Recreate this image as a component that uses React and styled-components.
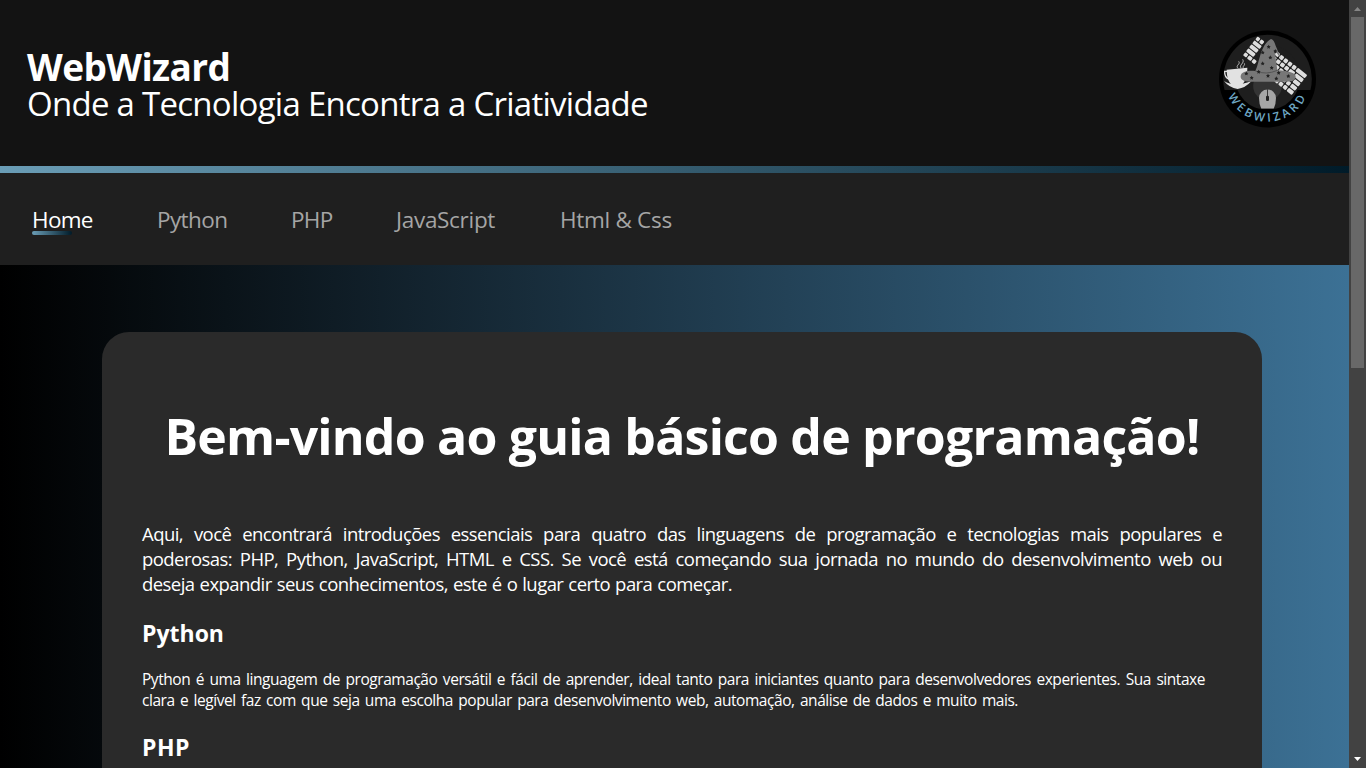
import React from "react";
import styled, { createGlobalStyle } from "styled-components";

const Global = createGlobalStyle`
  * { box-sizing: border-box; margin: 0; padding: 0; }
  body { background: #000; font-family: "Open Sans", "Noto Sans", sans-serif; color: #fff; overflow: hidden; }
`;
const Window = styled.div`
  display: flex;
  width: 1366px;
  height: 768px;
  overflow: hidden;
`;
const Page = styled.div`
  width: 1349px;
  display: flex;
  flex-direction: column;
`;
const Header = styled.header`
  flex: none;
  height: 166px;
  padding: 0 33px 0 27px;
  display: flex;
  justify-content: space-between;
  background: #131313;
`;
const Brand = styled.div`
  padding-top: 49px;
  white-space: nowrap;
`;
const BrandName = styled.h1`
  font-size: 37px;
  line-height: 36px;
  font-weight: 700;
  letter-spacing: -0.6px;
`;
const Tagline = styled.p`
  font-size: 33px;
  line-height: 37px;
  letter-spacing: -0.73px;
`;
const LogoSvg = styled.svg`
  display: block;
  width: 97px;
  height: 98px;
  margin-top: 30px;
`;
const Divider = styled.div`
  flex: none;
  height: 7px;
  background: linear-gradient(to right, #6a9db6, #001b29);
`;
const Nav = styled.nav`
  flex: none;
  height: 92px;
  padding: 31px 32px 0;
  display: flex;
  gap: 64px;
  background: #1f1f1f;
`;
const NavItem = styled.a`
  width: ${(p) => p.$w}px;
  font-size: 22.5px;
  line-height: 32px;
  letter-spacing: ${(p) => p.$ls || 0}px;
  white-space: nowrap;
  color: ${(p) => (p.$active ? "#fff" : "#a5a5a5")};
  &::after {
    content: "";
    display: ${(p) => (p.$active ? "block" : "none")};
    width: 40px;
    height: 4px;
    margin-top: -5px;
    border-radius: 2px;
    background: linear-gradient(to right, #6a9db6, #001b29);
  }
`;
const Main = styled.main`
  flex: 1;
  padding: 67px 87px 0 102px;
  background: linear-gradient(to right, #000, #3c7195);
`;
const Card = styled.section`
  height: 600px;
  padding: 71px 40px 0;
  border-radius: 27px;
  background: #2a2a2a;
`;
const Title = styled.h2`
  font-size: 50px;
  line-height: 66px;
  font-weight: 700;
  text-align: center;
  white-space: nowrap;
  letter-spacing: -0.8px;
`;
const Intro = styled.p`
  margin-top: 52px;
  font-size: 18.5px;
  line-height: 25px;
  letter-spacing: -0.55px;
`;
const Text = styled.p`
  margin-top: 20px;
  font-size: 15.5px;
  line-height: 21px;
  letter-spacing: -0.45px;
`;
const Line = styled.span`
  display: block;
  width: ${(p) => p.$w}px;
  white-space: nowrap;
  text-align: justify;
  text-align-last: justify;
`;
const Heading = styled.h3`
  margin-top: ${(p) => p.$mt}px;
  font-size: 23px;
  line-height: 32px;
  font-weight: 700;
  letter-spacing: ${(p) => p.$ls || 0}px;
`;
const Scrollbar = styled.div`
  width: 17px;
  display: flex;
  flex-direction: column;
  align-items: center;
  background: #424242;
`;
const Arrow = styled.svg`
  display: block;
  width: 17px;
  height: 17px;
`;
const Thumb = styled.div`
  width: 13px;
  height: 351px;
  margin-bottom: auto;
  background: #686868;
`;

const stars = [
  [176, 80], [158, 97], [196, 93], [181, 112], [158, 130], [185, 143],
  [146, 155], [174, 167], [206, 158], [125, 173], [109, 160], [199, 175], [235, 168],
];

// Rows of keys laid out on a keyboard tilted across the badge
const Keys = ({ x, y, angle, scale = 1, rows }) => (
  <g transform={`translate(${x} ${y}) rotate(${angle}) scale(${scale})`} fill="#dedede">
    {rows.map((row, r) =>
      row.map(([kx, w]) => <rect key={`${r}-${kx}`} x={kx} y={r * 15} width={w} height="12" rx="3" />)
    )}
  </g>
);

const Logo = () => (
  <LogoSvg viewBox="27 30 291 294" role="img" aria-label="WebWizard">
    <defs>
      <clipPath id="upper"><rect x="27" y="30" width="291" height="180" /></clipPath>
      <clipPath id="lower"><rect x="27" y="30" width="291" height="236" /></clipPath>
      <path id="arc" d="M44 157V177A128 128 0 0 0 300 177V157" />
    </defs>
    <circle cx="172.500" cy="177" r="145.500" fill="#000" />
    <circle cx="172.500" cy="177" r="133" fill="#1e1e1e" clipPath="url(#upper)" />
    <g clipPath="url(#lower)">
      <circle cx="172.500" cy="172" r="98" fill="#1e1e1e" />
      <circle cx="172.500" cy="198" r="43" fill="#343434" />
      <path d="M154 266Q147 252 147 234a25 25 0 0 1 51 0Q198 252 191 266Z" fill="#a6a6a6" />
    </g>
    <path d="M172.500 208V230" stroke="#222" strokeWidth="2.500" />
    <rect x="168" y="227" width="9" height="16" rx="4" fill="#222" />
    <Keys x={143} y={49} angle={38} rows={[[[0, 11], [14, 12]], [[0, 28]], [[0, 28]], [[0, 28]], [[0, 12], [15, 14], [32, 12]]]} />
    <Keys
      x={201}
      y={94}
      angle={38}
      scale={1.06}
      rows={[
        [[0, 12], [15, 12], [30, 12], [45, 12], [60, 12], [75, 34]],
        [[0, 12], [15, 12], [30, 12], [45, 12], [60, 18], [81, 28]],
        [[7, 12], [22, 12], [37, 12], [52, 12], [67, 18], [88, 21]],
        [[15, 12], [30, 12], [45, 12], [60, 12], [75, 12], [90, 19]],
        [[45, 12], [60, 12], [75, 12], [90, 19]],
      ]}
    />
    <path d="M50 149L112 143C112 170 105 187 92 198H70C57 190 50 174 50 149Z" fill="#e2e2e2" />
    <path d="M52 154H44Q43 173 58 178" stroke="#e2e2e2" strokeWidth="4" fill="none" />
    <path d="M42 183Q73 203 124 184Q106 204 83 207Q57 203 42 183Z" fill="#e2e2e2" />
    <path d="M84 145c-9-9 9-12 2-21M93 144c-7-10 12-14 5-26M101 145c-6-6 6-9 2-15" stroke="#d0d0d0" strokeWidth="2.500" fill="none" />
    <path d="M183 57C190 58 193 66 197 77L212 113C204 107 201 98 194 90L202 151C235 153 257 158 257 170C257 181 241 185 221 185H120C101 185 91 179 92 168C94 155 113 151 136 153C149 128 150 75 183 57Z" fill="#777" />
    <path d="M136 153Q168 166 202 151" stroke="#555" strokeWidth="3" fill="none" />
    {stars.map(([x, y]) => (
      <path
        key={`${x}-${y}`}
        transform={`translate(${x} ${y})`}
        d="M0-6L2-2 6-1 3 2 4 6 0 4-4 6-3 2-6-1-2-2Z"
        fill="#222"
      />
    ))}
    <text fill="#6fa8c4" fontSize="35" fontWeight="600" letterSpacing="10" textAnchor="middle">
      <textPath href="#arc" startOffset="50.500%">WEBWIZARD</textPath>
    </text>
  </LogoSvg>
);

export default function App() {
  return (
    <>
      <Global />
      <Window>
        <Page>
          <Header>
            <Brand>
              <BrandName>WebWizard</BrandName>
              <Tagline>Onde a Tecnologia Encontra a Criatividade</Tagline>
            </Brand>
            <Logo />
          </Header>
          <Divider />
          <Nav>
            <NavItem $active $w={61} $ls={-0.7}>Home</NavItem>
            <NavItem $w={70} $ls={-0.6}>Python</NavItem>
            <NavItem $w={41} $ls={-0.7}>PHP</NavItem>
            <NavItem $w={100} $ls={-0.3}>JavaScript</NavItem>
            <NavItem $w={113} $ls={-0.3}>Html &amp; Css</NavItem>
          </Nav>
          <Main>
            <Card>
              <Title>Bem-vindo ao guia básico de programação!</Title>
              <Intro>
                <Line $w={1080}>Aqui, você encontrará introduções essenciais para quatro das linguagens de programação e tecnologias mais populares e</Line>
                <Line $w={1080}>poderosas: PHP, Python, JavaScript, HTML e CSS. Se você está começando sua jornada no mundo do desenvolvimento web ou</Line>
                <Line $w={590}>deseja expandir seus conhecimentos, este é o lugar certo para começar.</Line>
              </Intro>
              <Heading $mt={21}>Python</Heading>
              <Text>
                <Line $w={1063}>Python é uma linguagem de programação versátil e fácil de aprender, ideal tanto para iniciantes quanto para desenvolvedores experientes. Sua sintaxe</Line>
                <Line $w={876}>clara e legível faz com que seja uma escolha popular para desenvolvimento web, automação, análise de dados e muito mais.</Line>
              </Text>
              <Heading $mt={20} $ls={0.5}>PHP</Heading>
            </Card>
          </Main>
        </Page>
        <Scrollbar>
          <Arrow viewBox="0 0 17 17"><path d="M5 11L8.500 7L12 11Z" fill="#868686" /></Arrow>
          <Thumb />
          <Arrow viewBox="0 0 17 17"><path d="M5 6L8.500 10L12 6Z" fill="#fff" /></Arrow>
        </Scrollbar>
      </Window>
    </>
  );
}
